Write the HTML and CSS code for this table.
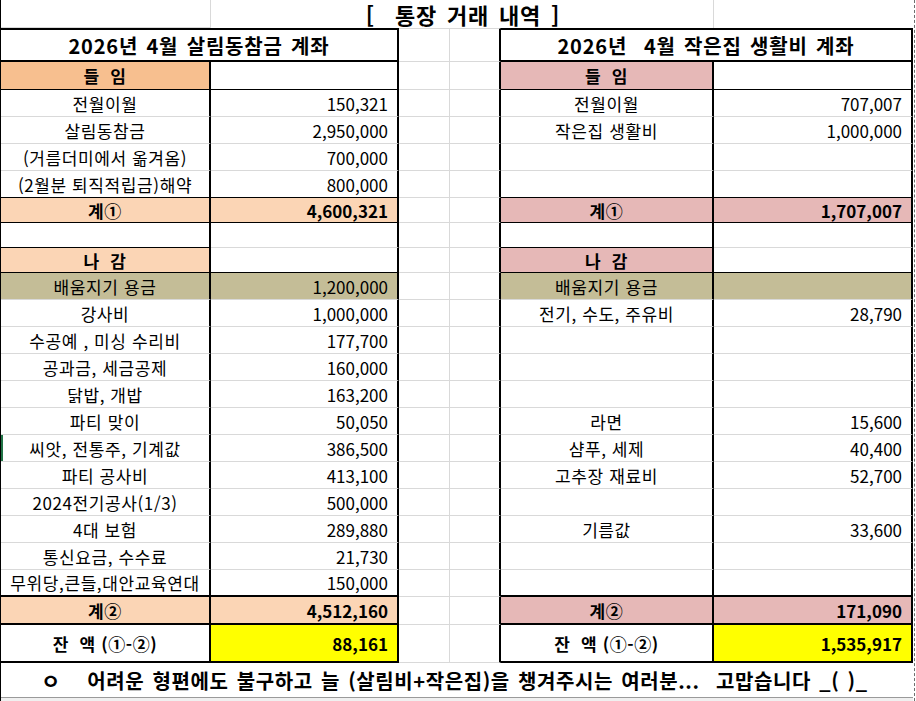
FILE: index.html
```html
<!DOCTYPE html>
<html lang="ko">
<head>
<meta charset="utf-8">
<title>통장 거래 내역</title>
<link rel="stylesheet" href="styles.css">
</head>
<body>
<div class="sheet">
  <div class="pagebreak"></div>

  <!-- row 1: title -->
  <div class="c"></div>
  <div class="title"><span class="title-text">[  통장 거래 내역 ]</span></div>
  <div class="c nb"></div>

  <!-- row 2: headers -->
  <div class="head">2026년 4월 살림동참금 계좌</div>
  <div class="c tg"></div>
  <div class="c tg rk"></div>
  <div class="head">2026년  4월 작은집 생활비 계좌</div>

  <!-- row 3 -->
  <div class="c rk bk1 b f-or">들  임</div>
  <div class="c rk bk1"></div>
  <div class="c"></div>
  <div class="c rk"></div>
  <div class="c rk bk1 b f-pk">들  임</div>
  <div class="c rk bk1"></div>

  <!-- row 4 -->
  <div class="c rk">전월이월</div>
  <div class="c rk num">150,321</div>
  <div class="c"></div>
  <div class="c rk"></div>
  <div class="c rk">전월이월</div>
  <div class="c rk num">707,007</div>

  <!-- row 5 -->
  <div class="c rk">살림동참금</div>
  <div class="c rk num">2,950,000</div>
  <div class="c"></div>
  <div class="c rk"></div>
  <div class="c rk">작은집 생활비</div>
  <div class="c rk num">1,000,000</div>

  <!-- row 6 -->
  <div class="c rk">(거름더미에서 옮겨옴)</div>
  <div class="c rk num">700,000</div>
  <div class="c"></div>
  <div class="c rk"></div>
  <div class="c rk"></div>
  <div class="c rk num"></div>

  <!-- row 7 -->
  <div class="c rk bk1">(2월분 퇴직적립금)해약</div>
  <div class="c rk bk1 num">800,000</div>
  <div class="c"></div>
  <div class="c rk"></div>
  <div class="c rk bk1"></div>
  <div class="c rk bk1 num"></div>

  <!-- row 8 -->
  <div class="c rk bk1 b f-pe">계①</div>
  <div class="c rk bk1 b num f-pe">4,600,321</div>
  <div class="c"></div>
  <div class="c rk"></div>
  <div class="c rk bk1 b f-pk">계①</div>
  <div class="c rk bk1 b num f-pk">1,707,007</div>

  <!-- row 9 -->
  <div class="c rk bk1"></div>
  <div class="c rk"></div>
  <div class="c"></div>
  <div class="c rk"></div>
  <div class="c rk bk1"></div>
  <div class="c rk"></div>

  <!-- row 10 -->
  <div class="c rk bk1 b f-pe">나  감</div>
  <div class="c rk bk1"></div>
  <div class="c"></div>
  <div class="c rk"></div>
  <div class="c rk bk1 b f-pk">나  감</div>
  <div class="c rk bk1"></div>

  <!-- row 11 -->
  <div class="c rk f-kh">배움지기 용금</div>
  <div class="c rk num f-kh">1,200,000</div>
  <div class="c"></div>
  <div class="c rk"></div>
  <div class="c rk f-kh">배움지기 용금</div>
  <div class="c rk num f-kh"></div>

  <!-- row 12 -->
  <div class="c rk">강사비</div>
  <div class="c rk num">1,000,000</div>
  <div class="c"></div>
  <div class="c rk"></div>
  <div class="c rk">전기, 수도, 주유비</div>
  <div class="c rk num">28,790</div>

  <!-- row 13 -->
  <div class="c rk">수공예 , 미싱 수리비</div>
  <div class="c rk num">177,700</div>
  <div class="c"></div>
  <div class="c rk"></div>
  <div class="c rk"></div>
  <div class="c rk num"></div>

  <!-- row 14 -->
  <div class="c rk">공과금, 세금공제</div>
  <div class="c rk num">160,000</div>
  <div class="c"></div>
  <div class="c rk"></div>
  <div class="c rk"></div>
  <div class="c rk num"></div>

  <!-- row 15 -->
  <div class="c rk">닭밥, 개밥</div>
  <div class="c rk num">163,200</div>
  <div class="c"></div>
  <div class="c rk"></div>
  <div class="c rk"></div>
  <div class="c rk num"></div>

  <!-- row 16 -->
  <div class="c rk">파티 맞이</div>
  <div class="c rk num">50,050</div>
  <div class="c"></div>
  <div class="c rk"></div>
  <div class="c rk">라면</div>
  <div class="c rk num">15,600</div>

  <!-- row 17 -->
  <div class="c rk active">씨앗, 전통주, 기계값</div>
  <div class="c rk num">386,500</div>
  <div class="c"></div>
  <div class="c rk"></div>
  <div class="c rk">샴푸, 세제</div>
  <div class="c rk num">40,400</div>

  <!-- row 18 -->
  <div class="c rk">파티 공사비</div>
  <div class="c rk num">413,100</div>
  <div class="c"></div>
  <div class="c rk"></div>
  <div class="c rk">고추장 재료비</div>
  <div class="c rk num">52,700</div>

  <!-- row 19 -->
  <div class="c rk">2024전기공사(1/3)</div>
  <div class="c rk num">500,000</div>
  <div class="c"></div>
  <div class="c rk"></div>
  <div class="c rk"></div>
  <div class="c rk num"></div>

  <!-- row 20 -->
  <div class="c rk">4대 보험</div>
  <div class="c rk num">289,880</div>
  <div class="c"></div>
  <div class="c rk"></div>
  <div class="c rk">기름값</div>
  <div class="c rk num">33,600</div>

  <!-- row 21 -->
  <div class="c rk">통신요금, 수수료</div>
  <div class="c rk num">21,730</div>
  <div class="c"></div>
  <div class="c rk"></div>
  <div class="c rk"></div>
  <div class="c rk num"></div>

  <!-- row 22 -->
  <div class="c rk bk2">무위당,큰들,대안교육연대</div>
  <div class="c rk bk2 num">150,000</div>
  <div class="c"></div>
  <div class="c rk"></div>
  <div class="c rk bk2"></div>
  <div class="c rk bk2 num"></div>

  <!-- row 23 -->
  <div class="c rk bk2 b f-pe">계②</div>
  <div class="c rk bk2 b num f-pe">4,512,160</div>
  <div class="c"></div>
  <div class="c rk"></div>
  <div class="c rk bk2 b f-pk">계②</div>
  <div class="c rk bk2 b num f-pk">171,090</div>

  <!-- row 24 -->
  <div class="c rk bk2 b">잔  액 (①-②)</div>
  <div class="c rk bk2 b num f-ye">88,161</div>
  <div class="c"></div>
  <div class="c rk"></div>
  <div class="c rk bk2 b">잔  액 (①-②)</div>
  <div class="c rk bk2 b num f-ye">1,535,917</div>

  <!-- row 25: footer -->
  <div class="foot"><span class="dot">ㅇ</span><span class="msg">어려운 형편에도 불구하고 늘 (살림비+작은집)을 챙겨주시는 여러분...  고맙습니다 _( )_</span></div>

  <!-- row 26: next sheet row (cut off) -->
  <div class="below"></div>
</div>
</body>
</html>
```

FILE: styles.css
```css
html, body {
  margin: 0;
  padding: 0;
  background: #ffffff;
}

body {
  width: 916px;
  height: 701px;
  overflow: hidden;
  font-family: "Noto Sans CJK KR", "Noto Sans", sans-serif;
  font-size: 17px;
  color: #000;
}

.sheet {
  box-sizing: border-box;
  width: 916px;
  height: 701px;
  display: grid;
  grid-template-columns: 210px 188px 51px 51px 213px 199px 3px;
  grid-template-rows: 28px 34px 28px 27px 27px 27px 27px 25px 25px 25px 27px repeat(11, 27px) 28px 38px 35px 3px;
  border-left: 1px solid #000;
}

.pagebreak {
  grid-column: 7;
  grid-row: 1 / -1;
  border-left: 1px dashed #6e6e6e;
  margin-left: 1px;
}

.c {
  box-sizing: border-box;
  border-right: 1px solid #d9d9d9;
  border-bottom: 1px solid #d9d9d9;
  display: flex;
  align-items: center;
  justify-content: center;
  white-space: pre;
  line-height: normal;
  letter-spacing: 0.6px;
  overflow: hidden;
}

.nb {
  border: none;
}

.tg {
  border-top: 1px solid #d9d9d9;
}

.rk {
  border-right: 2px solid #000;
}

.bk1 {
  border-bottom: 1px solid #000;
}

.bk2 {
  border-bottom: 2px solid #000;
}

.num {
  justify-content: flex-end;
  padding-right: 9px;
  letter-spacing: 0;
}

.b {
  font-weight: 700;
}

.f-or { background: #f7bf8f; }
.f-pe { background: #fbd5b5; }
.f-pk { background: #e6b8b7; }
.f-kh { background: #c4bd97; }
.f-ye { background: #ffff00; }

.active {
  box-shadow: inset 2px 0 0 #217346;
}

.title {
  grid-column: 2 / 6;
  box-sizing: border-box;
  border-right: 1px solid #d9d9d9;
  display: flex;
  align-items: center;
  justify-content: center;
  padding-left: 2px;
}

.title-text {
  white-space: pre;
  font-size: 22px;
  font-weight: 700;
  line-height: 26px;
  word-spacing: 3px;
  letter-spacing: 0.8px;
}

.head {
  grid-column: span 2;
  box-sizing: border-box;
  border-top: 2px solid #000;
  border-bottom: 2px solid #000;
  border-right: 2px solid #000;
  display: flex;
  align-items: center;
  justify-content: center;
  white-space: pre;
  font-size: 20px;
  font-weight: 700;
  line-height: normal;
  letter-spacing: 0.8px;
  word-spacing: 2px;
}

.foot {
  grid-column: 1 / 7;
  box-sizing: border-box;
  border-bottom: 1px solid #9a9a9a;
  display: flex;
  align-items: center;
  white-space: pre;
  font-size: 20px;
  font-weight: 700;
  line-height: normal;
  padding-left: 40px;
  gap: 27px;
}

.msg {
  letter-spacing: 0.6px;
  word-spacing: 2px;
}

.dot {
  font-size: 21px;
}

.below {
  grid-column: 1 / 7;
  background: #f0f0f0;
}
```
